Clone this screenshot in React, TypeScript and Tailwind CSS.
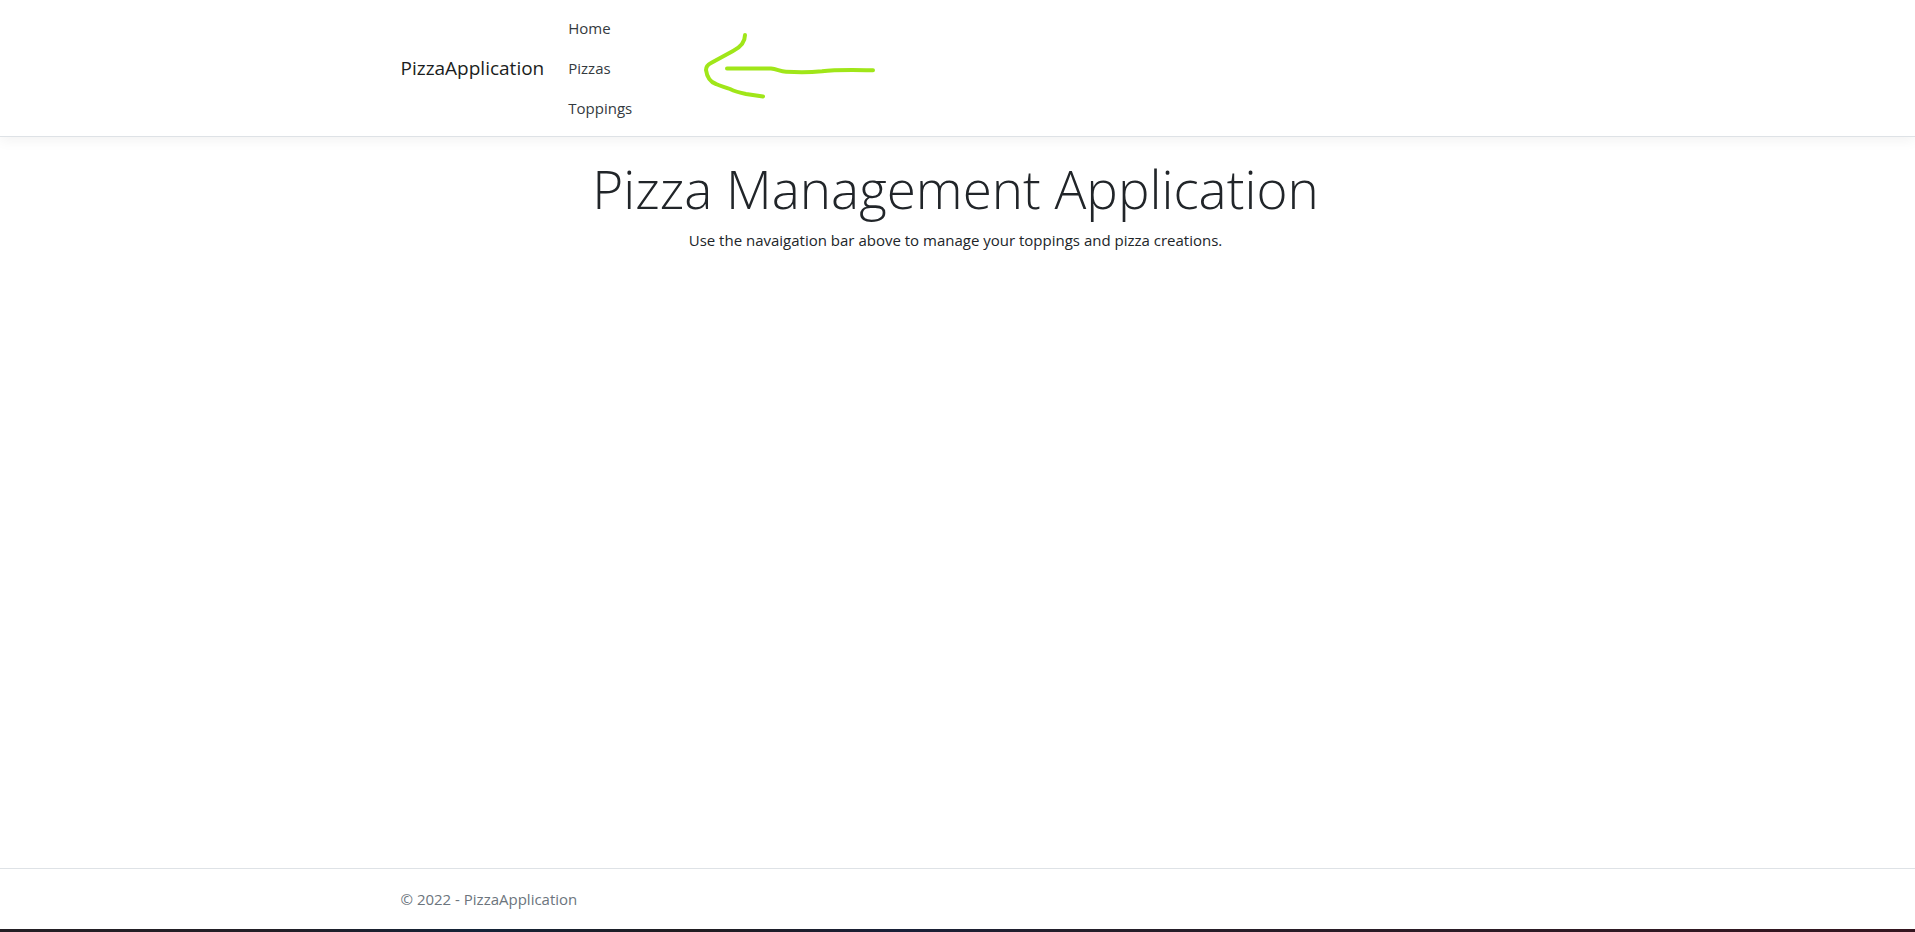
const links = ["Home", "Pizzas", "Toppings"];

function ArrowMark() {
  return (
    <svg
      aria-hidden="true"
      viewBox="0 0 220 96"
      className="pointer-events-none h-24 w-[220px]"
      fill="none"
      stroke="#a0e619"
      strokeWidth="4"
      strokeLinecap="round"
      strokeLinejoin="round"
    >
      <path d="M65 15C65 22 61 27 53 31L31 43C27 45 26 47 26 50C27 57 30 62 36 64C40 66 45 67 50 69C56 72 61 73 66 74L83 76.500" />
      <path d="M47 48.500H91C97 49 100 51.500 106 51.700C116 52.300 131 52.300 142 51.300C156 49.500 172 50 193 50.300" />
    </svg>
  );
}

export default function App() {
  return (
    <div className="flex min-h-screen flex-col bg-white font-['Segoe_UI','Open_Sans',sans-serif] text-[15px] leading-6 text-[#212529]">
      <header className="mb-4 border-b border-[#dee2e6] pr-1 shadow-[0_4px_12px_rgba(0,0,0,0.05)]">
        <nav className="mx-auto flex w-full max-w-[1140px] items-center px-[15px] py-2">
          <a href="#" className="mr-4 text-[19px] text-[#1b1e21]">
            PizzaApplication
          </a>
          <ul className="flex flex-col">
            {links.map((label) => (
              <li key={label}>
                <a href="#" className="block p-2 text-[#343a40]">
                  {label}
                </a>
              </li>
            ))}
          </ul>
          <div className="ml-10">
            <ArrowMark />
          </div>
        </nav>
      </header>
      <div className="flex-1 pr-1">
        <main className="mx-auto w-full max-w-[1140px] px-[15px] text-center">
          <h1 className="mb-1 text-[53px] leading-[71px] font-light">Pizza Management Application</h1>
          <p>Use the navaigation bar above to manage your toppings and pizza creations.</p>
        </main>
      </div>
      <footer className="border-t border-[#dee2e6] pr-1 text-[#6c757d]">
        <div className="mx-auto w-full max-w-[1140px] px-[15px] leading-[60px]">© 2022 - PizzaApplication</div>
      </footer>
      <div className="h-[3px] bg-[linear-gradient(to_right,#231f24_0%,#221f26_14%,#132338_25%,#201d20_36%,#182038_47%,#231f2a_56%,#2a1c26_75%,#35151f_100%)]" />
    </div>
  );
}
